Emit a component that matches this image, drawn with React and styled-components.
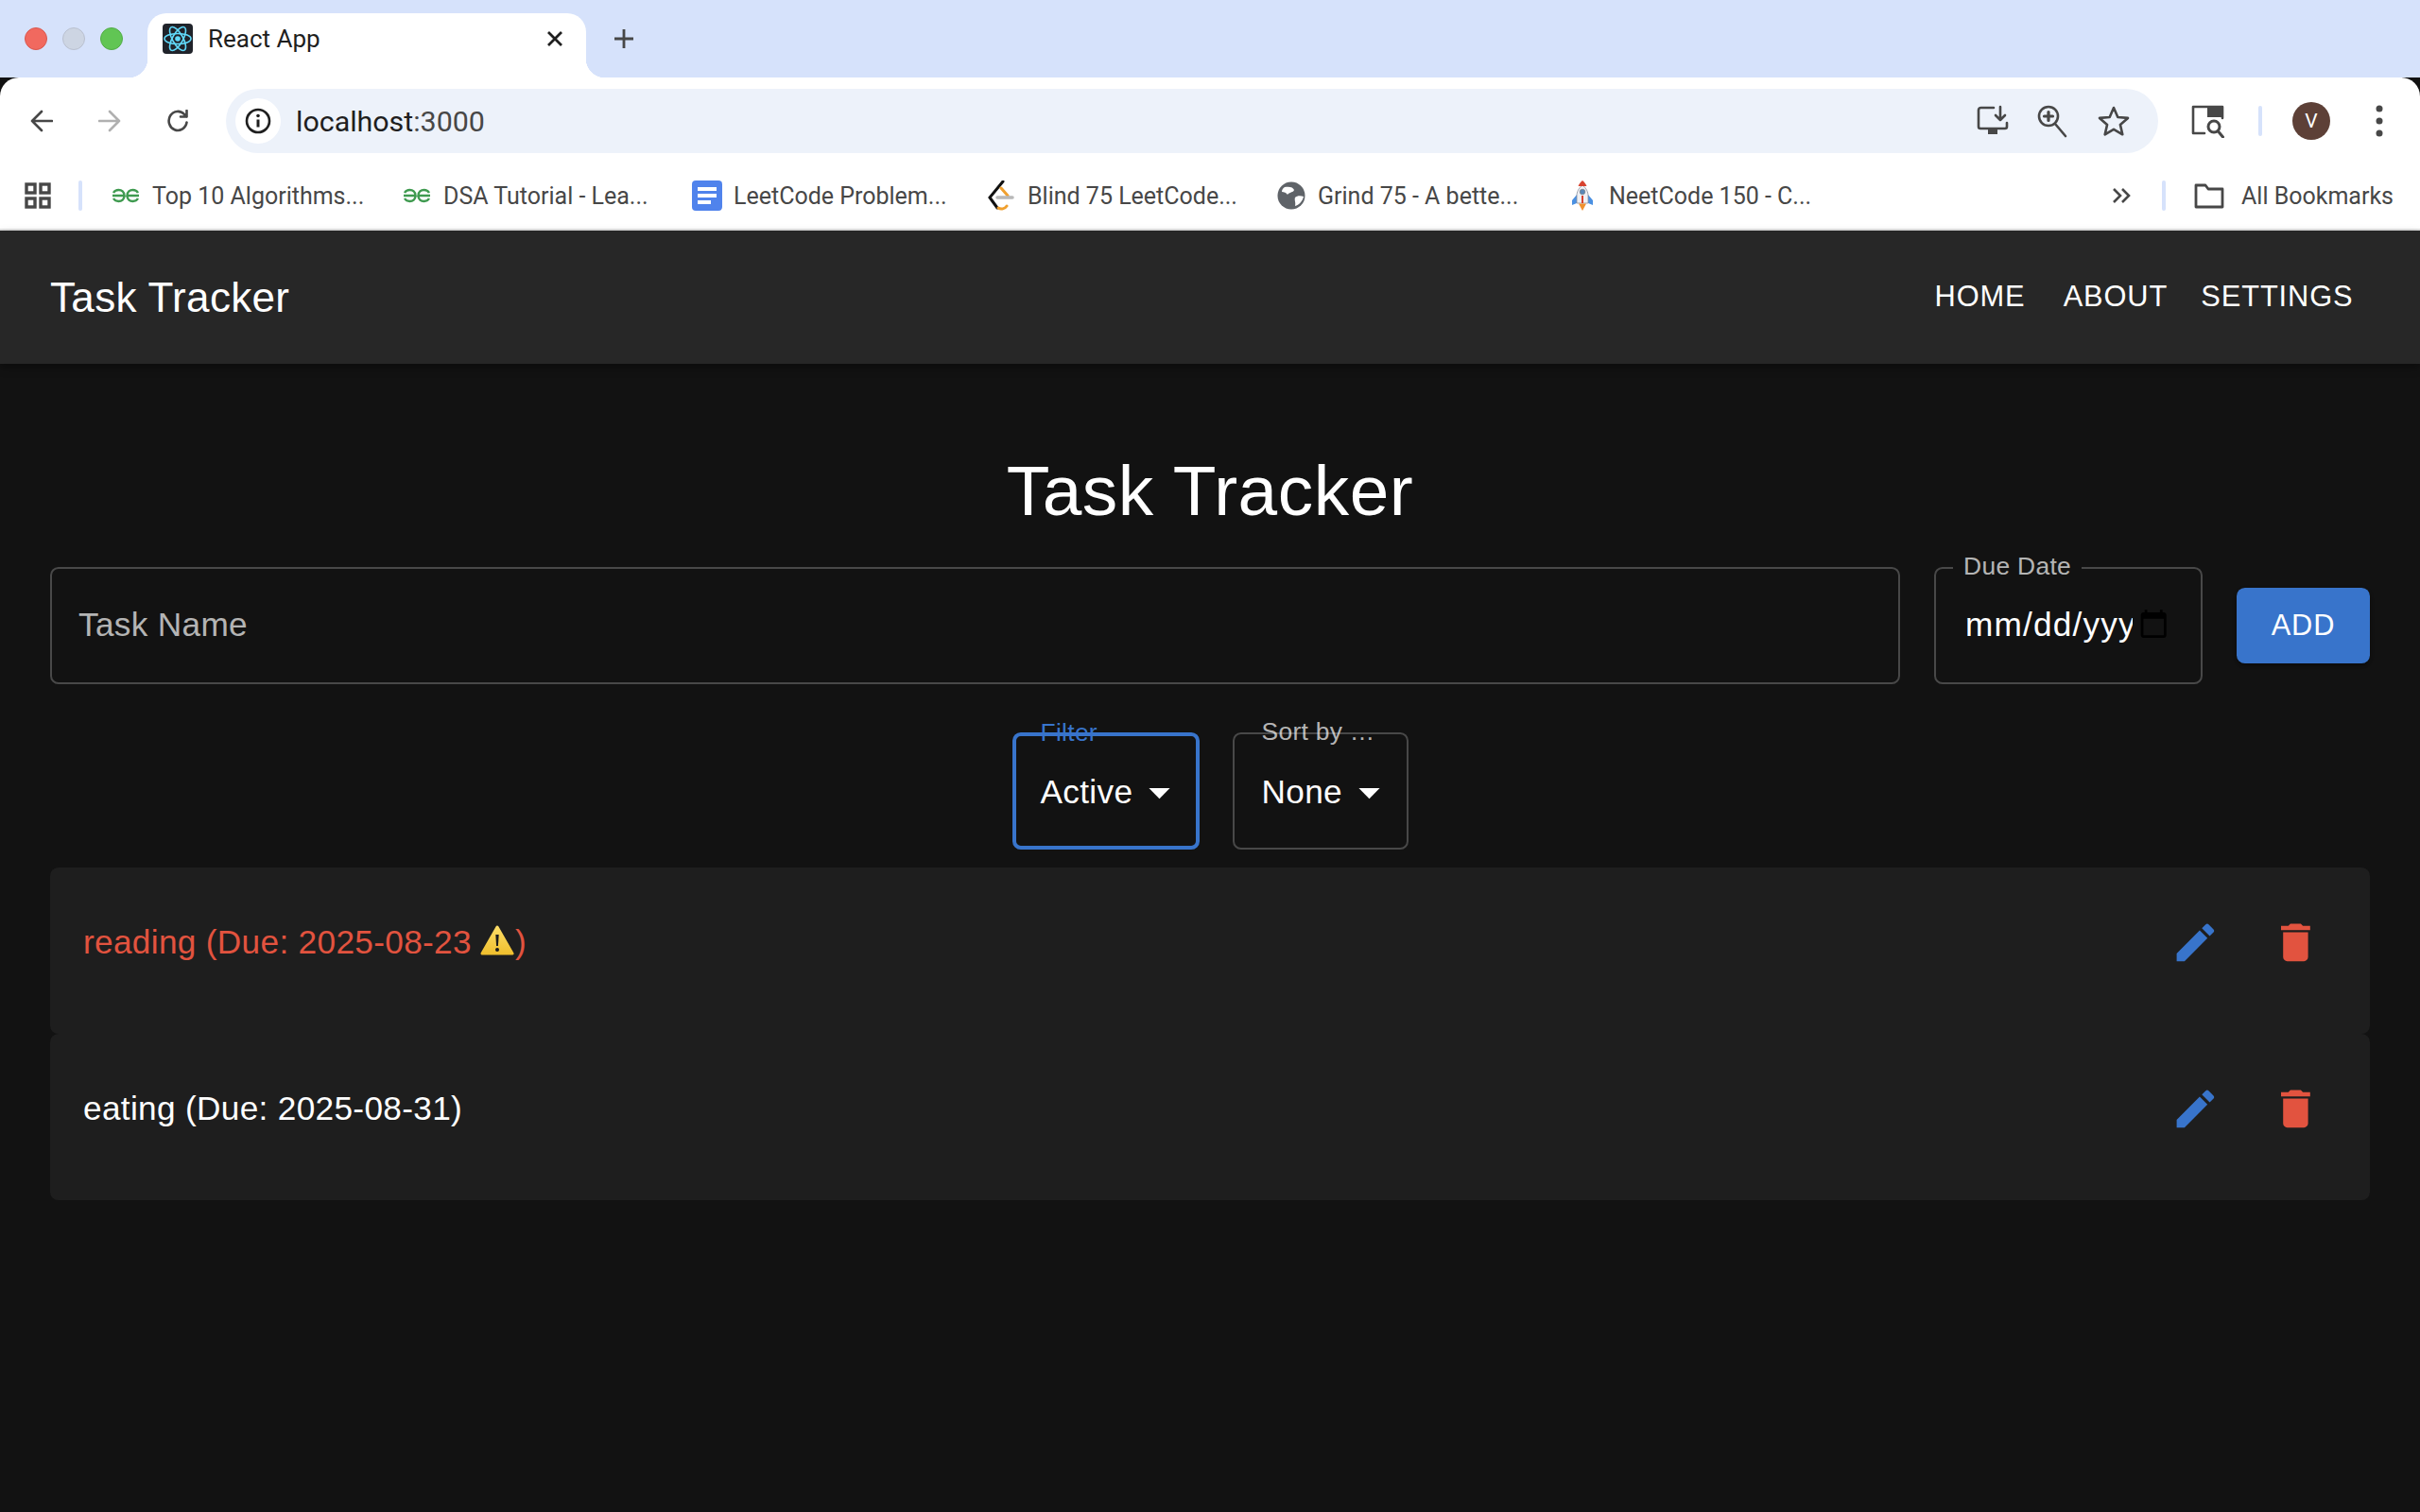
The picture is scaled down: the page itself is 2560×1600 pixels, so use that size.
import styled, { createGlobalStyle } from "styled-components"

const GlobalStyle = createGlobalStyle`
  html, body {
    margin: 0;
    padding: 0;
    background-color: #121212;
  }
  * {
    box-sizing: border-box;
  }
`

const Page = styled.div`
  width: 2560px;
  height: 1600px;
  overflow: hidden;
  display: flex;
  flex-direction: column;
  font-family: "Liberation Sans", Arial, sans-serif;
  background-color: #121212;
`

/* browser chrome */

const TabStrip = styled.div`
  height: 82px;
  flex-shrink: 0;
  background-color: #d6e2fb;
  display: flex;
  align-items: flex-end;
  padding-left: 26px;
`

const Lights = styled.div`
  display: flex;
  gap: 16px;
  height: 68px;
  padding-top: 15px;
  margin-right: 26px;
`

const Light = styled.span`
  width: 24px;
  height: 24px;
  border-radius: 50%;
  background-color: ${props => props.color};
  border: 1px solid ${props => props.edge};
`

const Tab = styled.div`
  position: relative;
  width: 464px;
  height: 68px;
  background-color: #fff;
  border-radius: 20px 20px 0 0;
  display: flex;
  align-items: center;
  padding: 0 23px 14px 16px;
  font-family: Roboto, "Liberation Sans", sans-serif;
  font-size: 26px;
  color: #1f1f1f;
  &::before, &::after {
    content: "";
    position: absolute;
    bottom: 0;
    width: 20px;
    height: 20px;
  }
  &::before {
    left: -20px;
    background: radial-gradient(circle at 0 0, #d6e2fb 20px, #fff 20.5px);
  }
  &::after {
    right: -20px;
    background: radial-gradient(circle at 100% 0, #d6e2fb 20px, #fff 20.5px);
  }
`

const Favicon = styled.svg`
  width: 32px;
  height: 32px;
  margin-right: 16px;
  flex-shrink: 0;
`

const TabTitle = styled.span`
  flex: 1;
`

const NewTab = styled.svg`
  width: 24px;
  height: 24px;
  margin: 0 0 29px 28px;
  align-self: flex-end;
`

const Toolbar = styled.div`
  height: 92px;
  flex-shrink: 0;
  background-color: #fff;
  border-radius: 20px 20px 0 0;
  display: flex;
  align-items: center;
  padding: 0 39px 0 32px;
  position: relative;
`

const NavIcon = styled.svg`
  width: 24px;
  height: 24px;
  margin-right: ${props => props.gap || 48}px;
  flex-shrink: 0;
`

const Omnibox = styled.div`
  width: 2044px;
  height: 68px;
  margin-left: -4px;
  border-radius: 34px;
  background-color: #edf2fa;
  display: flex;
  align-items: center;
  padding: 0 29px 0 10px;
`

const InfoChip = styled.div`
  width: 48px;
  height: 48px;
  border-radius: 50%;
  background-color: #fff;
  display: flex;
  align-items: center;
  justify-content: center;
  margin-right: 16px;
`

const Url = styled.div`
  flex: 1;
  font-family: Roboto, "Liberation Sans", sans-serif;
  font-size: 30.4px;
  color: #1f1f1f;
  span {
    color: #474747;
  }
`

const OmniIcon = styled.svg`
  width: 36px;
  height: 36px;
  margin-left: 28px;
`

const ToolIcon = styled.svg`
  width: 36px;
  height: 36px;
  margin-left: 34px;
`

const Divider = styled.span`
  width: 4px;
  height: 32px;
  border-radius: 2px;
  background-color: #d6e2fb;
  flex-shrink: 0;
  margin: ${props => props.margin};
`

const Avatar = styled.div`
  width: 40px;
  height: 40px;
  margin-left: 32px;
  border-radius: 50%;
  background-color: #5d4037;
  color: #fff;
  font-family: Roboto, "Liberation Sans", sans-serif;
  font-size: 21px;
  display: flex;
  align-items: center;
  justify-content: center;
`

const Bookmarks = styled.div`
  height: 70px;
  flex-shrink: 0;
  background-color: #fff;
  border-bottom: 2px solid #e3e3e3;
  display: flex;
  align-items: center;
  padding: 0 28px 2px 26px;
  font-family: Roboto, "Liberation Sans", sans-serif;
  font-size: 25px;
  color: #474747;
`

const Bookmark = styled.div`
  width: ${props => props.width}px;
  display: flex;
  align-items: center;
  gap: 12px;
  white-space: nowrap;
  flex-shrink: 0;
`

const BookmarkIcon = styled.svg`
  width: 32px;
  height: 32px;
  flex-shrink: 0;
`

const FolderIcon = styled.svg`
  width: 32px;
  height: 28px;
  margin-right: 18px;
  flex-shrink: 0;
`

const Spacer = styled.div`
  flex: 1;
`

/* app */

const AppBar = styled.header`
  height: 141px;
  flex-shrink: 0;
  background-color: #272727;
  box-shadow: 0 4px 9px rgba(0, 0, 0, 0.35);
  display: flex;
  align-items: center;
  padding: 0 53px;
  color: #fff;
  position: relative;
`

const Brand = styled.div`
  flex: 1;
  font-size: 44px;
  letter-spacing: 0.33px;
`

const NavLink = styled.div`
  padding: 12px 17.6px 14px;
  font-size: 30.8px;
  letter-spacing: 0.88px;
  margin-left: ${props => props.gap || 0}px;
`

const Main = styled.main`
  flex: 1;
  padding: 88px 53px 0;
  color: #fff;
`

const Title = styled.h1`
  margin: 0 0 35px;
  text-align: center;
  font-size: 74.8px;
  font-weight: 400;
  line-height: 92px;
  letter-spacing: 0.55px;
`

const Form = styled.div`
  display: flex;
  align-items: center;
  gap: 36px;
`

const Field = styled.div`
  position: relative;
  height: 124px;
  width: ${props => (props.width ? `${props.width}px` : "auto")};
  flex: ${props => (props.width ? "none" : 1)};
  border: 2.2px solid rgba(255, 255, 255, 0.23);
  border-radius: 8.8px;
  display: flex;
  align-items: center;
  padding: 0 0 3px ${props => (props.width ? 31 : 28)}px;
  font-size: 35.2px;
  letter-spacing: 0.33px;
`

const Placeholder = styled.span`
  color: rgba(255, 255, 255, 0.7);
`

const NotchLabel = styled.label`
  position: absolute;
  top: -18px;
  left: 18px;
  padding: 0 11px;
  background-color: #121212;
  font-size: 26.4px;
  line-height: 30px;
  color: rgba(255, 255, 255, 0.7);
`

const DateText = styled.span`
  width: 177px;
  overflow: hidden;
  white-space: nowrap;
  flex-shrink: 0;
  letter-spacing: 1.2px;
`

const CalendarIcon = styled.svg`
  width: 32.4px;
  height: 32.4px;
  margin-left: 6px;
  flex-shrink: 0;
`

const AddButton = styled.button`
  width: 141px;
  height: 80px;
  border: 0;
  border-radius: 8.8px;
  background-color: #3874cb;
  color: #fff;
  font-family: inherit;
  font-size: 30.8px;
  letter-spacing: 0.88px;
  box-shadow: 0 3px 3px rgba(0, 0, 0, 0.2), 0 2px 5px rgba(0, 0, 0, 0.14);
`

const Controls = styled.div`
  display: flex;
  justify-content: center;
  gap: 35px;
  margin: 51px 0 19px;
`

const SelectBox = styled.div`
  position: relative;
  width: ${props => props.width}px;
  height: 124px;
  border: ${props => (props.focused ? "4.4px solid #3874cb" : "2.2px solid rgba(255, 255, 255, 0.23)")};
  border-radius: 8.8px;
  display: flex;
  align-items: center;
  padding: 2px 0 0 ${props => (props.focused ? 26 : 29)}px;
  font-size: 35.2px;
  letter-spacing: 0.33px;
`

const SelectLabel = styled.label`
  position: absolute;
  top: ${props => (props.focused ? -19 : -18)}px;
  left: ${props => (props.focused ? 26 : 29)}px;
  font-size: 26.4px;
  line-height: 30px;
  letter-spacing: 0.3px;
  color: ${props => (props.focused ? "#3874cb" : "rgba(255, 255, 255, 0.7)")};
  white-space: pre;
`

const Caret = styled.svg`
  width: 53px;
  height: 53px;
  margin-left: 2px;
`

const TaskCard = styled.div`
  background-color: #1e1e1e;
  border-radius: 8.8px;
  display: flex;
  align-items: center;
  height: 176px;
  padding: 44px 35px 62px;
`

const TaskText = styled.div`
  flex: 1;
  font-size: 35.2px;
  letter-spacing: 0.33px;
  color: ${props => (props.overdue ? "#e2533f" : "#fff")};
  display: flex;
  align-items: center;
`

const WarnIcon = styled.svg`
  width: 36px;
  height: 33px;
  margin: 0 1px 4px 9px;
`

const ActionIcon = styled.svg`
  width: 52.8px;
  height: 52.8px;
  margin-left: ${props => props.gap}px;
  margin-right: ${props => props.end || 0}px;
  fill: ${props => props.color};
`

const stroke = { fill: "none", stroke: "#474747", strokeWidth: 2.6, strokeLinecap: "round", strokeLinejoin: "round" }

const GfgIcon = () => (
  <BookmarkIcon viewBox="0 0 32 32">
    <g fill="none" stroke="#3f9a50" strokeWidth="2.4">
      <path d="M2 16h12.5c0-4-3-6-6-6-2.500 0-4.500 1.300-5.500 3" />
      <path d="M14.500 16c0 4-3 6-6 6-2.500 0-4.500-1.300-5.500-3" />
      <path d="M30 16H17.500c0-4 3-6 6-6 2.500 0 4.500 1.300 5.500 3" />
      <path d="M17.500 16c0 4 3 6 6 6 2.500 0 4.500-1.300 5.500-3" />
    </g>
  </BookmarkIcon>
)

const TaskRow = ({ overdue, children }) => (
  <TaskCard>
    <TaskText overdue={overdue}>{children}</TaskText>
    <ActionIcon viewBox="0 0 24 24" color="#3874cb">
      <path d="M3 17.25V21h3.75L17.81 9.94l-3.75-3.75L3 17.25zM20.71 7.04c.39-.39.39-1.02 0-1.41l-2.34-2.34a.9959.9959 0 0 0-1.41 0l-1.83 1.83 3.75 3.75 1.83-1.83z" />
    </ActionIcon>
    <ActionIcon viewBox="0 0 24 24" color="#e2533f" gap={53} end={17}>
      <path d="M6 19c0 1.100.9 2 2 2h8c1.100 0 2-.9 2-2V7H6v12zM19 4h-3.500l-1-1h-5l-1 1H5v2h14V4z" />
    </ActionIcon>
  </TaskCard>
)

const App = () => (
  <Page>
    <GlobalStyle />
    <TabStrip>
      <Lights>
        <Light color="#f1695f" edge="#d9574e" />
        <Light color="#cdd5e3" edge="#b9c0cf" />
        <Light color="#61c554" edge="#52ac47" />
      </Lights>
      <Tab>
        <Favicon viewBox="0 0 32 32">
          <rect x="0" y="0" width="32" height="32" rx="4" fill="#20232a" />
          <g fill="none" stroke="#61dafb" strokeWidth="1.600">
            <ellipse cx="16" cy="16" rx="14" ry="5.500" />
            <ellipse cx="16" cy="16" rx="14" ry="5.500" transform="rotate(60 16 16)" />
            <ellipse cx="16" cy="16" rx="14" ry="5.500" transform="rotate(120 16 16)" />
          </g>
          <circle cx="16" cy="16" r="2.800" fill="#61dafb" />
        </Favicon>
        <TabTitle>React App</TabTitle>
        <svg width="20" height="20" viewBox="0 0 20 20">
          <path d="M3 3l14 14M17 3L3 17" stroke="#1f1f1f" strokeWidth="2.800" />
        </svg>
      </Tab>
      <NewTab viewBox="0 0 24 24">
        <path d="M12 2v20M2 12h20" stroke="#474747" strokeWidth="2.800" />
      </NewTab>
    </TabStrip>

    <Toolbar>
      <NavIcon viewBox="0 0 24 24" gap={48}>
        <path d="M23 12H2M12 2L2 12l10 10" {...stroke} />
      </NavIcon>
      <NavIcon viewBox="0 0 24 24" gap={48}>
        <path d="M1 12h21M12 2l10 10-10 10" {...stroke} stroke="#b0b0b0" />
      </NavIcon>
      <NavIcon viewBox="0 0 24 24" gap={43}>
        <path d="M21.500 13.500A9.500 10 0 1 1 19 5l2.500 2.500M21.500 1v6.500H15" {...stroke} />
      </NavIcon>
      <Omnibox>
        <InfoChip>
          <svg width="28" height="28" viewBox="0 0 28 28">
            <circle cx="14" cy="14" r="12" fill="none" stroke="#1f1f1f" strokeWidth="2.600" />
            <path d="M14 12.500v8" stroke="#1f1f1f" strokeWidth="3" />
            <circle cx="14" cy="8.500" r="1.800" fill="#1f1f1f" />
          </svg>
        </InfoChip>
        <Url>localhost<span>:3000</span></Url>
        <OmniIcon viewBox="0 0 36 36">
          <path d="M19 4H5.500A2.500 2.500 0 0 0 3 6.500V24a2 2 0 0 0 2 2h26a2 2 0 0 0 2-2v-4" {...stroke} />
          <path d="M13 27h10v5H13z" fill="#474747" />
          <path d="M26 3v14M21 12l5 5 5-5" {...stroke} />
        </OmniIcon>
        <OmniIcon viewBox="0 0 36 36">
          <circle cx="13" cy="13" r="10" {...stroke} />
          <path d="M20 21l11 13" {...stroke} />
          <path d="M13 8.500v9M8.500 13h9" {...stroke} strokeWidth={3.2} />
        </OmniIcon>
        <OmniIcon viewBox="0 0 36 36">
          <path d="M18 4l4.300 10 10.700.9-8.100 7 2.400 10.400-9.300-5.500-9.300 5.500 2.400-10.400-8.100-7 10.700-.9z" {...stroke} />
        </OmniIcon>
      </Omnibox>
      <ToolIcon viewBox="0 0 36 36">
        <path d="M15 31H3V3h31v12" {...stroke} />
        <path d="M18 2h16v12H18z" fill="#474747" />
        <circle cx="25" cy="24" r="6" {...stroke} strokeWidth={3} />
        <path d="M29.500 29l5 6" {...stroke} strokeWidth={3} />
      </ToolIcon>
      <Divider margin="0 0 0 36px" />
      <Avatar>V</Avatar>
      <Spacer />
      <svg width="8" height="36" viewBox="0 0 8 36">
        <circle cx="4" cy="5" r="3.500" fill="#474747" />
        <circle cx="4" cy="18" r="3.500" fill="#474747" />
        <circle cx="4" cy="31" r="3.500" fill="#474747" />
      </svg>
    </Toolbar>

    <Bookmarks>
      <svg width="28" height="28" viewBox="0 0 28 28" fill="none" stroke="#474747" strokeWidth="3.400">
        <rect x="2" y="2" width="9" height="9" />
        <rect x="17" y="2" width="9" height="9" />
        <rect x="2" y="17" width="9" height="9" />
        <rect x="17" y="17" width="9" height="9" />
      </svg>
      <Divider margin="0 30px 0 29px" />
      <Bookmark width={308}>
        <GfgIcon />
        Top 10 Algorithms...
      </Bookmark>
      <Bookmark width={307}>
        <GfgIcon />
        DSA Tutorial - Lea...
      </Bookmark>
      <Bookmark width={311}>
        <BookmarkIcon viewBox="0 0 32 32">
          <rect width="32" height="32" rx="4" fill="#5083ec" />
          <path d="M6 7h20v4H6zM6 14h20v4H6zM6 21h14v4H6z" fill="#fff" />
        </BookmarkIcon>
        LeetCode Problem...
      </Bookmark>
      <Bookmark width={307}>
        <BookmarkIcon viewBox="0 0 32 32">
          <path d="M18 1L4 18l8 11" fill="none" stroke="#111" strokeWidth="3" strokeLinecap="round" />
          <path d="M16 8l7 8M22 27c-2 3-6 4-9 2" fill="none" stroke="#f0a02e" strokeWidth="3" strokeLinecap="round" />
          <path d="M12 18h16" stroke="#b8b8b8" strokeWidth="3.500" strokeLinecap="round" />
        </BookmarkIcon>
        Blind 75 LeetCode...
      </Bookmark>
      <Bookmark width={308}>
        <BookmarkIcon viewBox="0 0 32 32">
          <circle cx="16" cy="16" r="14.500" fill="#5f6368" />
          <path d="M9 7c5-1 9 0 10 3-1 3-5 2-7 5-1-2-4-3-6-3 0-2 1-4 3-5zM29 17c-3-1-7-1-9 1-1 3 1 5 0 9 4-1 8-5 9-10z" fill="#fff" />
        </BookmarkIcon>
        Grind 75 - A bette...
      </Bookmark>
      <Bookmark>
        <BookmarkIcon viewBox="0 0 32 32">
          <path d="M10 15l-5 6v5l5-2zM22 15l5 6v5l-5-2z" fill="#4a90e2" />
          <path d="M16 5c4 3 6 7 6 11v8H10v-8c0-4 2-8 6-11z" fill="#eef0f5" stroke="#8a8f9c" strokeWidth=".8" />
          <path d="M16 0c2 1.500 3.500 3.500 4.500 6h-9c1-2.500 2.500-4.500 4.500-6z" fill="#d8432f" />
          <circle cx="16" cy="12" r="2.800" fill="#5a88b8" stroke="#777" strokeWidth=".6" />
          <path d="M15 16h2v8h-2z" fill="#d8432f" />
          <path d="M12 24.500h8L16 32z" fill="#f0912f" />
        </BookmarkIcon>
        NeetCode 150 - C...
      </Bookmark>
      <Spacer />
      <svg width="20" height="18" viewBox="0 0 20 18" fill="none" stroke="#474747" strokeWidth="2.600">
        <path d="M2 2l7 7-7 7M11 2l7 7-7 7" />
      </svg>
      <Divider margin="0 30px 0 33px" />
      <FolderIcon viewBox="0 0 32 28" fill="none" stroke="#474747" strokeWidth="2.800" strokeLinejoin="round">
        <path d="M2 3h10l3 4h15v19H2z" />
      </FolderIcon>
      All Bookmarks
    </Bookmarks>

    <AppBar>
      <Brand>Task Tracker</Brand>
      <NavLink>HOME</NavLink>
      <NavLink gap={5}>ABOUT</NavLink>
      <NavLink>SETTINGS</NavLink>
    </AppBar>

    <Main>
      <Title>Task Tracker</Title>
      <Form>
        <Field>
          <Placeholder>Task Name</Placeholder>
        </Field>
        <Field width={284}>
          <NotchLabel>Due Date</NotchLabel>
          <DateText>mm/dd/yyyy</DateText>
          <CalendarIcon viewBox="0 0 24 24" fill="#000">
            <path d="M20 3h-1V1h-2v2H7V1H5v2H4c-1.100 0-2 .9-2 2v16c0 1.100.9 2 2 2h16c1.100 0 2-.9 2-2V5c0-1.100-.9-2-2-2zm0 18H4V8h16v13z" />
          </CalendarIcon>
        </Field>
        <AddButton>ADD</AddButton>
      </Form>
      <Controls>
        <SelectBox focused width={198}>
          <SelectLabel focused>Filter</SelectLabel>
          Active
          <Caret viewBox="0 0 24 24" fill="#fff">
            <path d="M7 10l5 5 5-5z" />
          </Caret>
        </SelectBox>
        <SelectBox width={186}>
          <SelectLabel>Sort by …</SelectLabel>
          None
          <Caret viewBox="0 0 24 24" fill="#fff">
            <path d="M7 10l5 5 5-5z" />
          </Caret>
        </SelectBox>
      </Controls>
      <TaskRow overdue>
        reading (Due: 2025-08-23
        <WarnIcon viewBox="0 0 36 33">
          <defs>
            <linearGradient id="warn" x1="0" y1="0" x2="0" y2="1">
              <stop offset="0" stopColor="#fbdc66" />
              <stop offset="1" stopColor="#f0c02f" />
            </linearGradient>
          </defs>
          <path d="M18 2L34 30H2z" fill="url(#warn)" stroke="url(#warn)" strokeWidth="3" strokeLinejoin="round" />
          <path d="M16.300 10h3.400l-.8 12h-1.800z" fill="#1c1c1c" />
          <circle cx="18" cy="26" r="2" fill="#1c1c1c" />
        </WarnIcon>
        )
      </TaskRow>
      <TaskRow>eating (Due: 2025-08-31)</TaskRow>
    </Main>
  </Page>
)

export default App
